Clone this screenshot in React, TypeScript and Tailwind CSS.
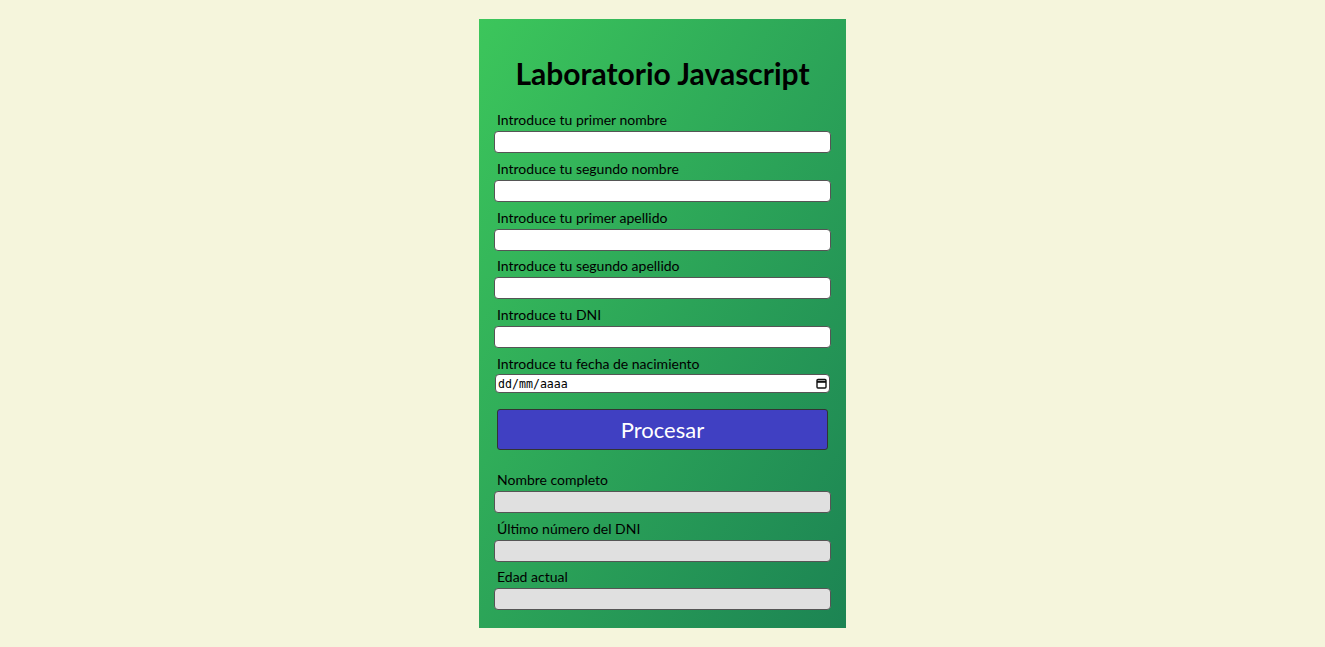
const inputs = [
  'Introduce tu primer nombre',
  'Introduce tu segundo nombre',
  'Introduce tu primer apellido',
  'Introduce tu segundo apellido',
  'Introduce tu DNI',
];

const outputs = ['Nombre completo', 'Último número del DNI', 'Edad actual'];

export default function App() {
  return (
    <div className="min-h-screen bg-[#f5f5dc] flex justify-center pt-[19px]" style={{ fontFamily: 'Lato, "Noto Sans", sans-serif' }}>
      <div className="w-[367px] h-[609px] bg-gradient-to-br from-[#3cc65b] to-[#1c8453] px-[15px] pt-[36px] text-black">
        <h1 className="text-center text-[30px] font-bold leading-[36px] mb-[22px]">Laboratorio Javascript</h1>

        {inputs.map((label, i) => (
          <div key={label} className={i === 2 ? 'mb-[8px]' : 'mb-[9px]'}>
            <label className="block pl-[3px] text-[14px] leading-[14px] mb-[4px]">{label}</label>
            <input type="text" className="block w-full h-[22px] bg-white border border-[#555] rounded-[4px]" />
          </div>
        ))}

        <div className="mb-[16px]">
          <label className="block pl-[3px] text-[14px] leading-[14px] mb-[3px]">Introduce tu fecha de nacimiento</label>
          <div className="relative w-[335px] ml-[1px]">
            <input
              type="text"
              placeholder="dd/mm/aaaa"
              className="block w-full h-[19px] bg-white border border-[#555] rounded-[4px] text-[11.6px] leading-[17px] pl-[2px] placeholder:text-black"
              style={{ fontFamily: '"DejaVu Sans Mono", monospace' }}
            />
            <svg className="absolute right-[3px] top-[4px] w-[11px] h-[11px]" viewBox="0 0 11 11" fill="none" stroke="#111" strokeWidth="1.4">
              <rect x="1" y="1.5" width="9" height="8.5" rx="1" />
              <line x1="1" y1="3.8" x2="10" y2="3.8" strokeWidth="2" />
            </svg>
          </div>
        </div>

        <button className="block w-[331px] ml-[3px] h-[41px] bg-[#4040c2] border border-[#333] rounded-[3px] text-white text-[22px] mb-[23px]">
          Procesar
        </button>

        {outputs.map((label, i) => (
          <div key={label} className={i === 1 ? 'mb-[8px]' : 'mb-[9px]'}>
            <label className="block pl-[3px] text-[14px] leading-[14px] mb-[4px]">{label}</label>
            <input type="text" disabled className="block w-full h-[22px] bg-[#e0e0e0] border border-[#555] rounded-[4px]" />
          </div>
        ))}
      </div>
    </div>
  );
}
